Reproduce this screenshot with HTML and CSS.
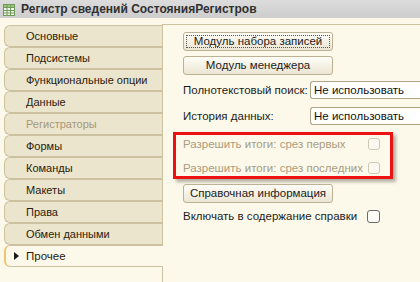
FILE: index.html
```html
<!DOCTYPE html>
<html>
<head>
<meta charset="utf-8">
<link rel="stylesheet" href="styles.css">
</head>
<body>
<div class="window">
  <div class="titlebar">
    <svg class="ticon" width="12" height="12" viewBox="0 0 12 12">
      <rect x="0.5" y="0.5" width="11" height="11" fill="#f4f7ee" stroke="#6f9a5a"/>
      <rect x="1" y="1" width="10" height="2.5" fill="#9cc47e"/>
      <path d="M1 3.5H11M1 6.5H11M1 9H11M4 1V11M7.5 1V11" stroke="#6f9a5a" stroke-width="1"/>
    </svg>
    <span class="title">Регистр сведений СостоянияРегистров</span>
  </div>
  <div class="main">
    <ul class="tabs">
      <li class="tab">Основные</li>
      <li class="tab">Подсистемы</li>
      <li class="tab">Функциональные опции</li>
      <li class="tab">Данные</li>
      <li class="tab disabled">Регистраторы</li>
      <li class="tab">Формы</li>
      <li class="tab">Команды</li>
      <li class="tab">Макеты</li>
      <li class="tab">Права</li>
      <li class="tab">Обмен данными</li>
      <li class="tab active"><span class="arrow"></span>Прочее</li>
    </ul>
    <div class="panel">
      <button class="btn focus"><span class="btn-in">Модуль набора записей</span></button>
      <button class="btn btn2"><span class="btn-in">Модуль менеджера</span></button>
      <div class="field first">
        <span class="flabel">Полнотекстовый поиск:</span>
        <span class="input">Не использовать</span>
      </div>
      <div class="field">
        <span class="flabel">История данных:</span>
        <span class="input">Не использовать</span>
      </div>
      <div class="highlight">
        <div class="crow dis"><span class="clabel">Разрешить итоги: срез первых</span><span class="cbox dis"></span></div>
        <div class="crow dis"><span class="clabel">Разрешить итоги: срез последних</span><span class="cbox dis"></span></div>
      </div>
      <button class="btn btn3"><span class="btn-in">Справочная информация</span></button>
      <div class="crow last"><span class="clabel">Включать в содержание справки</span><span class="cbox"></span></div>
    </div>
  </div>
</div>
</body>
</html>
```
FILE: styles.css
```css
* { box-sizing: border-box; }
html, body { margin: 0; padding: 0; }
body {
  width: 420px;
  height: 282px;
  overflow: hidden;
  background: #fcf9ea;
  font-family: "Liberation Sans", Arial, sans-serif;
  font-size: 11px;
  color: #1c1c1c;
  white-space: nowrap;
}
.window { width: 420px; height: 282px; display: flex; flex-direction: column; }
.titlebar {
  height: 18px;
  flex: none;
  display: flex;
  align-items: center;
  padding-left: 3px;
  background: linear-gradient(#dcdcdc, #cdcdcd);
}
.ticon { flex: none; margin-right: 6px; margin-top: 1px; }
.title { font-weight: bold; font-size: 12px; color: #303030; }
.main { flex: 1; display: flex; padding-top: 6px; }
.tabs {
  list-style: none;
  margin: 1px 0 0 4px;
  padding: 0;
  width: 158px;
  flex: none;
  position: relative;
  z-index: 1;
}
.tab {
  height: 22px;
  line-height: 20px;
  padding-left: 21px;
  background: #ece5cd;
  border: 1px solid #cdc29f;
  border-right: none;
  border-radius: 6px 0 0 6px;
  color: #2a200c;
  font-size: 11px;
}
.tab.disabled { color: #a6977a; }
.tab.active {
  background: #fcf9ea;
  border-left: 2px solid #f1c56a;
  padding-left: 8px;
  display: flex;
  align-items: center;
  margin-right: -1px;
  font-size: 11.5px;
}
.arrow {
  width: 0; height: 0;
  border-left: 5px solid #1a1a1a;
  border-top: 4px solid transparent;
  border-bottom: 4px solid transparent;
  margin-right: 7px;
}
.panel {
  flex: 1;
  border-left: 1px solid #cdc29f;
  border-top: 1px solid #cdc29f;
  padding: 7px 0 0 20px;
  display: flex;
  flex-direction: column;
  align-items: flex-start;
}
.btn {
  width: 150px;
  height: 19px;
  padding: 2px;
  border: 1px solid #bcb293;
  border-radius: 3px;
  background: linear-gradient(#fefdf7, #ebe6d4);
  font-family: inherit;
  font-size: 11.5px;
  color: #1c1c1c;
  display: flex;
  white-space: nowrap;
}
.btn-in {
  flex: 1;
  display: flex;
  align-items: center;
  justify-content: center;
  border: 1px dotted transparent;
  line-height: 11px;
}
.btn.focus .btn-in { border-color: #555; }
.btn2 { margin-top: 5px; }
.btn3 { margin-top: 5px; }
.field { display: flex; align-items: center; height: 18px; margin-top: 8px; font-size: 11.5px; }
.field.first { margin-top: 6px; }
.flabel { width: 127px; flex: none; }
.input {
  width: 120px;
  height: 18px;
  line-height: 16px;
  padding-left: 3px;
  background: #fff;
  border: 1px solid #aea486;
  border-right: none;
  border-radius: 3px 0 0 3px;
  color: #111;
}
.highlight {
  margin: 7px 0 0 -10px;
  width: 220px;
  height: 47px;
  border: 3px solid #ee1111;
  padding: 0 0 0 7px;
  box-shadow: 3px 3px 3px rgba(90, 90, 80, 0.45);
  display: flex;
  flex-direction: column;
  justify-content: center;
  gap: 10px;
}
.crow { display: flex; align-items: center; height: 14px; font-size: 11.5px; }
.crow .clabel { width: 185px; flex: none; }
.crow.dis .clabel { color: #aa9c80; }
.crow.last { margin-top: 6px; }
.crow.last .clabel { width: 184px; }
.cbox {
  width: 13px;
  height: 13px;
  border: 1px solid #6b6b6b;
  border-radius: 3px;
  background: #fdfcf6;
}
.cbox.dis { border-color: #cfc8b4; width: 12px; height: 12px; background: #fbf9ee; }
```
